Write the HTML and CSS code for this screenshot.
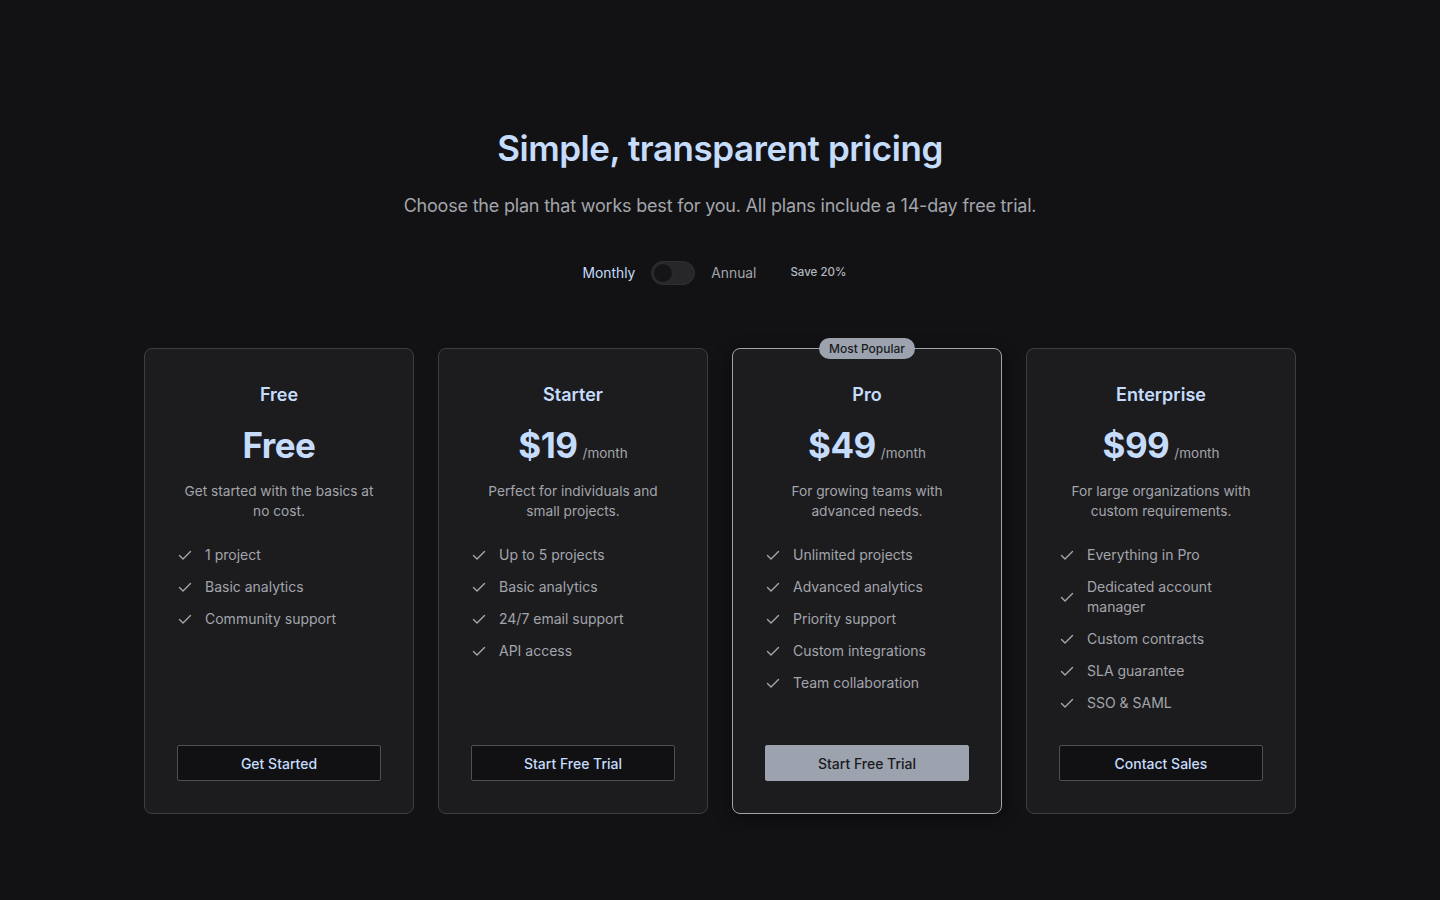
FILE: index.html
```html
<!DOCTYPE html>
<html lang="en">
<head>
<meta charset="utf-8">
<title>Pricing</title>
<link rel="stylesheet" href="styles.css">
</head>
<body>
<main class="page">
  <header class="hero">
    <h1 class="title">Simple, transparent pricing</h1>
    <p class="subtitle">Choose the plan that works best for you. All plans include a 14-day free trial.</p>
    <div class="billing">
      <span class="billing-label active">Monthly</span>
      <span class="toggle"><span class="knob"></span></span>
      <span class="billing-label">Annual</span>
      <span class="save">Save 20%</span>
    </div>
  </header>

  <section class="plans">
    <article class="card">
      <h2 class="plan-name">Free</h2>
      <div class="price"><span class="amount">Free</span></div>
      <p class="desc">Get started with the basics at no cost.</p>
      <ul class="features">
        <li><svg class="check" viewBox="0 0 16 16"><path d="M2.5 8.5l3.5 3.5L13.5 4.5"/></svg><span>1 project</span></li>
        <li><svg class="check" viewBox="0 0 16 16"><path d="M2.5 8.5l3.5 3.5L13.5 4.5"/></svg><span>Basic analytics</span></li>
        <li><svg class="check" viewBox="0 0 16 16"><path d="M2.5 8.5l3.5 3.5L13.5 4.5"/></svg><span>Community support</span></li>
      </ul>
      <button class="btn">Get Started</button>
    </article>

    <article class="card">
      <h2 class="plan-name">Starter</h2>
      <div class="price"><span class="amount">$19</span><span class="per">/month</span></div>
      <p class="desc">Perfect for individuals and small projects.</p>
      <ul class="features">
        <li><svg class="check" viewBox="0 0 16 16"><path d="M2.5 8.5l3.5 3.5L13.5 4.5"/></svg><span>Up to 5 projects</span></li>
        <li><svg class="check" viewBox="0 0 16 16"><path d="M2.5 8.5l3.5 3.5L13.5 4.5"/></svg><span>Basic analytics</span></li>
        <li><svg class="check" viewBox="0 0 16 16"><path d="M2.5 8.5l3.5 3.5L13.5 4.5"/></svg><span>24/7 email support</span></li>
        <li><svg class="check" viewBox="0 0 16 16"><path d="M2.5 8.5l3.5 3.5L13.5 4.5"/></svg><span>API access</span></li>
      </ul>
      <button class="btn">Start Free Trial</button>
    </article>

    <article class="card featured">
      <span class="badge">Most Popular</span>
      <h2 class="plan-name">Pro</h2>
      <div class="price"><span class="amount">$49</span><span class="per">/month</span></div>
      <p class="desc">For growing teams with advanced needs.</p>
      <ul class="features">
        <li><svg class="check" viewBox="0 0 16 16"><path d="M2.5 8.5l3.5 3.5L13.5 4.5"/></svg><span>Unlimited projects</span></li>
        <li><svg class="check" viewBox="0 0 16 16"><path d="M2.5 8.5l3.5 3.5L13.5 4.5"/></svg><span>Advanced analytics</span></li>
        <li><svg class="check" viewBox="0 0 16 16"><path d="M2.5 8.5l3.5 3.5L13.5 4.5"/></svg><span>Priority support</span></li>
        <li><svg class="check" viewBox="0 0 16 16"><path d="M2.5 8.5l3.5 3.5L13.5 4.5"/></svg><span>Custom integrations</span></li>
        <li><svg class="check" viewBox="0 0 16 16"><path d="M2.5 8.5l3.5 3.5L13.5 4.5"/></svg><span>Team collaboration</span></li>
      </ul>
      <button class="btn btn-primary">Start Free Trial</button>
    </article>

    <article class="card">
      <h2 class="plan-name">Enterprise</h2>
      <div class="price"><span class="amount">$99</span><span class="per">/month</span></div>
      <p class="desc">For large organizations with custom requirements.</p>
      <ul class="features">
        <li><svg class="check" viewBox="0 0 16 16"><path d="M2.5 8.5l3.5 3.5L13.5 4.5"/></svg><span>Everything in Pro</span></li>
        <li><svg class="check" viewBox="0 0 16 16"><path d="M2.5 8.5l3.5 3.5L13.5 4.5"/></svg><span class="narrow">Dedicated account manager</span></li>
        <li><svg class="check" viewBox="0 0 16 16"><path d="M2.5 8.5l3.5 3.5L13.5 4.5"/></svg><span>Custom contracts</span></li>
        <li><svg class="check" viewBox="0 0 16 16"><path d="M2.5 8.5l3.5 3.5L13.5 4.5"/></svg><span>SLA guarantee</span></li>
        <li><svg class="check" viewBox="0 0 16 16"><path d="M2.5 8.5l3.5 3.5L13.5 4.5"/></svg><span>SSO &amp; SAML</span></li>
      </ul>
      <button class="btn">Contact Sales</button>
    </article>
  </section>
</main>
</body>
</html>
```
FILE: styles.css
```css
* { box-sizing: border-box; }

html, body {
  margin: 0;
  padding: 0;
  background: #121214;
  color: #c6dbfb;
  font-family: "Inter", "Liberation Sans", sans-serif;
}

.page {
  min-height: 900px;
  padding-top: 124px;
  display: flex;
  flex-direction: column;
  align-items: center;
}

.hero {
  display: flex;
  flex-direction: column;
  align-items: center;
}

.title {
  margin: 0;
  font-size: 35px;
  line-height: 48px;
  font-weight: 600;
  letter-spacing: -0.45px;
  color: #c6dcfc;
}

.subtitle {
  margin: 20px 0 0;
  font-size: 18px;
  line-height: 28px;
  color: #a3a5ab;
  letter-spacing: -0.2px;
}

.billing {
  margin-top: 41px;
  display: flex;
  align-items: center;
  height: 24px;
}

.billing-label {
  font-size: 13.8px;
  color: #a3a5ab;
}
.billing-label.active {
  color: #c6dcfc;
}

.toggle {
  width: 44px;
  height: 24px;
  margin: 0 16px;
  border-radius: 12px;
  background: #27272a;
  border: 1px solid #303034;
  display: flex;
  align-items: center;
  padding: 1px;
}

.knob {
  width: 20px;
  height: 20px;
  border-radius: 50%;
  background: #151517;
  border: 1px solid #2e2e33;
}

.save {
  margin-left: 23px;
  padding: 0 11px;
  font-size: 11.5px;
  font-weight: 500;
  color: #b3b7bf;
  position: relative;
  top: -1px;
}

.plans {
  margin-top: 63px;
  display: grid;
  grid-template-columns: repeat(4, 270px);
  gap: 24px;
}

.card {
  position: relative;
  height: 466px;
  background: #1c1c1f;
  border: 1px solid #3b3e46;
  border-radius: 8px;
  padding: 32px 32px 32px;
  display: flex;
  flex-direction: column;
  align-items: stretch;
}

.card.featured {
  border-color: #9fa3ab;
  box-shadow: 0 4px 18px rgba(0, 0, 0, 0.45);
}

.badge {
  position: absolute;
  top: -11px;
  left: 50%;
  transform: translateX(-50%);
  height: 21px;
  padding: 0 10px;
  border-radius: 11px;
  background: #9ca3af;
  color: #1a1b1e;
  font-size: 12px;
  font-weight: 500;
  line-height: 21px;
  white-space: nowrap;
}

.plan-name {
  margin: 0;
  text-align: center;
  font-size: 18px;
  line-height: 28px;
  font-weight: 600;
  color: #c6dcfc;
}

.price {
  margin-top: 16px;
  display: flex;
  justify-content: center;
  align-items: baseline;
  height: 40px;
}

.amount {
  font-size: 35px;
  line-height: 40px;
  font-weight: 700;
  letter-spacing: -0.5px;
  color: #c6dcfc;
}

.per {
  margin-left: 5px;
  font-size: 13.5px;
  color: #a3a5ab;
}

.desc {
  margin: 16px auto 0;
  max-width: 204px;
  text-align: center;
  font-size: 13.7px;
  line-height: 20px;
  color: #a3a5ab;
}

.features {
  list-style: none;
  margin: 24px 0 0;
  padding: 0;
  display: flex;
  flex-direction: column;
  gap: 12px;
}

.features li {
  display: flex;
  align-items: center;
  gap: 12px;
  font-size: 14px;
  line-height: 20px;
  color: #a3a5ab;
}

.features li span.narrow {
  max-width: 160px;
}

.check {
  flex: 0 0 16px;
  width: 16px;
  height: 16px;
  fill: none;
  stroke: #a3a7ae;
  stroke-width: 1.4;
  stroke-linecap: round;
  stroke-linejoin: round;
}

.btn {
  margin-top: auto;
  height: 36px;
  width: 100%;
  border: 1px solid #4b5058;
  border-radius: 2px;
  background: #111113;
  color: #c6dcfc;
  font-family: inherit;
  font-size: 14px;
  font-weight: 500;
  cursor: pointer;
}

.btn-primary {
  background: #9ca3af;
  border-color: #9ca3af;
  color: #1a1b1e;
}
```
